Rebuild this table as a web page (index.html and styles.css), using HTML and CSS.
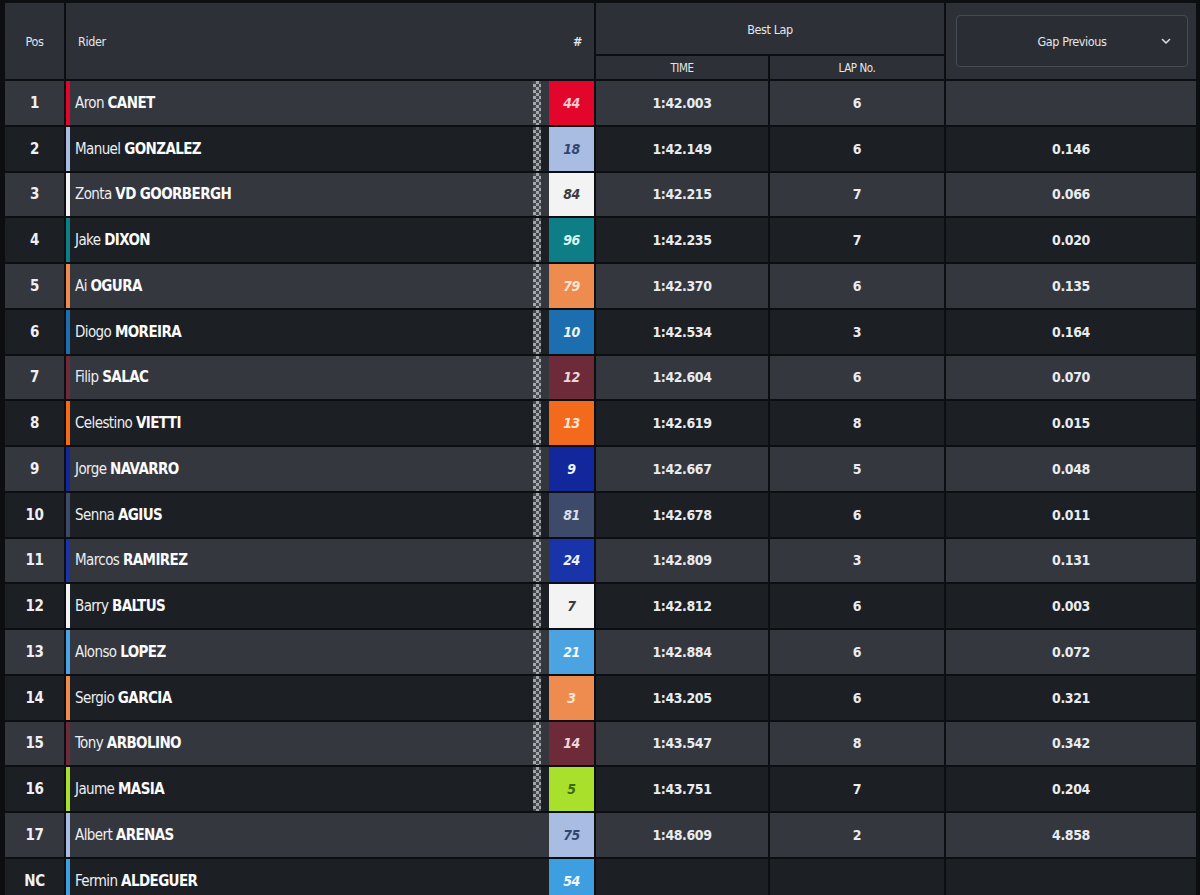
FILE: index.html
```html
<!DOCTYPE html>
<html lang="en">
<head>
<meta charset="utf-8">
<title>Results</title>
<link rel="stylesheet" href="styles.css">
</head>
<body>
<div class="board">
  <div class="head">
    <div class="h-pos">Pos</div>
    <div class="h-rider"><span>Rider</span><span class="hash">#</span></div>
    <div class="h-best">Best Lap</div>
    <div class="h-time">TIME</div>
    <div class="h-lap">LAP No.</div>
    <div class="h-gap">
      <div class="select">
        <span>Gap Previous</span>
        <svg class="chev" width="10" height="7" viewBox="0 0 10 7"><path d="M1.5 1.5 L5 5 L8.5 1.5" fill="none" stroke="#d8dbe0" stroke-width="1.6" stroke-linecap="round" stroke-linejoin="round"/></svg>
      </div>
    </div>
  </div>

  <div class="row light t-red"><div class="pos">1</div><div class="rider"><span class="name">Aron <b>CANET</b></span><span class="flag"></span><span class="num">44</span></div><div class="time">1:42.003</div><div class="lap">6</div><div class="gap"></div></div>
  <div class="row dark t-lav"><div class="pos">2</div><div class="rider"><span class="name">Manuel <b>GONZALEZ</b></span><span class="flag"></span><span class="num">18</span></div><div class="time">1:42.149</div><div class="lap">6</div><div class="gap">0.146</div></div>
  <div class="row light t-white"><div class="pos">3</div><div class="rider"><span class="name">Zonta <b>VD GOORBERGH</b></span><span class="flag"></span><span class="num">84</span></div><div class="time">1:42.215</div><div class="lap">7</div><div class="gap">0.066</div></div>
  <div class="row dark t-teal"><div class="pos">4</div><div class="rider"><span class="name">Jake <b>DIXON</b></span><span class="flag"></span><span class="num">96</span></div><div class="time">1:42.235</div><div class="lap">7</div><div class="gap">0.020</div></div>
  <div class="row light t-peach"><div class="pos">5</div><div class="rider"><span class="name">Ai <b>OGURA</b></span><span class="flag"></span><span class="num">79</span></div><div class="time">1:42.370</div><div class="lap">6</div><div class="gap">0.135</div></div>
  <div class="row dark t-blue"><div class="pos">6</div><div class="rider"><span class="name">Diogo <b>MOREIRA</b></span><span class="flag"></span><span class="num">10</span></div><div class="time">1:42.534</div><div class="lap">3</div><div class="gap">0.164</div></div>
  <div class="row light t-maroon"><div class="pos">7</div><div class="rider"><span class="name">Filip <b>SALAC</b></span><span class="flag"></span><span class="num">12</span></div><div class="time">1:42.604</div><div class="lap">6</div><div class="gap">0.070</div></div>
  <div class="row dark t-orange"><div class="pos">8</div><div class="rider"><span class="name">Celestino <b>VIETTI</b></span><span class="flag"></span><span class="num">13</span></div><div class="time">1:42.619</div><div class="lap">8</div><div class="gap">0.015</div></div>
  <div class="row light t-navy"><div class="pos">9</div><div class="rider"><span class="name">Jorge <b>NAVARRO</b></span><span class="flag"></span><span class="num">9</span></div><div class="time">1:42.667</div><div class="lap">5</div><div class="gap">0.048</div></div>
  <div class="row dark t-slate"><div class="pos">10</div><div class="rider"><span class="name">Senna <b>AGIUS</b></span><span class="flag"></span><span class="num">81</span></div><div class="time">1:42.678</div><div class="lap">6</div><div class="gap">0.011</div></div>
  <div class="row light t-royal"><div class="pos">11</div><div class="rider"><span class="name">Marcos <b>RAMIREZ</b></span><span class="flag"></span><span class="num">24</span></div><div class="time">1:42.809</div><div class="lap">3</div><div class="gap">0.131</div></div>
  <div class="row dark t-white"><div class="pos">12</div><div class="rider"><span class="name">Barry <b>BALTUS</b></span><span class="flag"></span><span class="num">7</span></div><div class="time">1:42.812</div><div class="lap">6</div><div class="gap">0.003</div></div>
  <div class="row light t-sky"><div class="pos">13</div><div class="rider"><span class="name">Alonso <b>LOPEZ</b></span><span class="flag"></span><span class="num">21</span></div><div class="time">1:42.884</div><div class="lap">6</div><div class="gap">0.072</div></div>
  <div class="row dark t-peach"><div class="pos">14</div><div class="rider"><span class="name">Sergio <b>GARCIA</b></span><span class="flag"></span><span class="num">3</span></div><div class="time">1:43.205</div><div class="lap">6</div><div class="gap">0.321</div></div>
  <div class="row light t-maroon"><div class="pos">15</div><div class="rider"><span class="name">Tony <b>ARBOLINO</b></span><span class="flag"></span><span class="num">14</span></div><div class="time">1:43.547</div><div class="lap">8</div><div class="gap">0.342</div></div>
  <div class="row dark t-lime"><div class="pos">16</div><div class="rider"><span class="name">Jaume <b>MASIA</b></span><span class="flag"></span><span class="num">5</span></div><div class="time">1:43.751</div><div class="lap">7</div><div class="gap">0.204</div></div>
  <div class="row light t-lav"><div class="pos">17</div><div class="rider"><span class="name">Albert <b>ARENAS</b></span><span class="noflag"></span><span class="num">75</span></div><div class="time">1:48.609</div><div class="lap">2</div><div class="gap">4.858</div></div>
  <div class="row dark t-sky2"><div class="pos">NC</div><div class="rider"><span class="name">Fermin <b>ALDEGUER</b></span><span class="noflag"></span><span class="num">54</span></div><div class="time"></div><div class="lap"></div><div class="gap"></div></div>
</div>
</body>
</html>
```

FILE: styles.css
```css
* { box-sizing: border-box; }
html, body {
  margin: 0;
  background: #0d0e11;
}
body {
  font-family: "DejaVu Sans Condensed", "DejaVu Sans", sans-serif;
  font-stretch: condensed;
  color: #eef0f3;
  overflow: hidden;
}
.board {
  width: 1196px;
  padding: 3px 0 0 5px;
  display: flex;
  flex-direction: column;
  gap: 2px;
}
.head {
  display: grid;
  grid-template-columns: 59px 528px 172px 174px 250px;
  grid-template-rows: 51px 23px;
  gap: 2px;
  font-size: 12.5px;
  letter-spacing: -0.4px;
  color: #e3e6eb;
}
.head > div { background: #2d3036; }
.h-pos {
  grid-row: 1 / 3;
  display: flex; align-items: center; justify-content: center;
}
.h-rider {
  grid-row: 1 / 3;
  display: flex; align-items: center; justify-content: space-between;
  padding: 0 10px 0 12px;
}
.hash { font-weight: bold; margin-right: 2px; }
.h-best {
  grid-column: 3 / 5;
  display: flex; align-items: center; justify-content: center;
  padding-top: 2px;
}
.h-time, .h-lap {
  grid-row: 2;
  display: flex; align-items: center; justify-content: center;
  font-size: 11.5px;
}
.h-time { grid-column: 3; }
.h-lap { grid-column: 4; }
.h-gap {
  grid-column: 5;
  grid-row: 1 / 3;
  display: flex; align-items: center;
  padding: 0 8px 0 10px;
}
.select {
  flex: 1;
  height: 52px;
  border: 1px solid #474b53;
  border-radius: 4px;
  background: #2a2d33;
  display: flex; align-items: center; justify-content: center;
  position: relative;
  font-size: 12.5px;
}
.chev { position: absolute; right: 16px; top: 22px; }

.row {
  display: grid;
  grid-template-columns: 59px 528px 172px 174px 250px;
  height: 43.75px;
  gap: 2px;
  font-size: 14px;
  letter-spacing: -0.4px;
}
.row > div { display: flex; align-items: center; }
.row.light > div { background: #34373e; }
.row.dark > div { background: #1c1f24; }
.pos { justify-content: center; font-weight: bold; font-size: 15px; }
.rider {
  border-left: 4px solid var(--team);
  padding-left: 5px;
}
.name { flex: 1; color: #eceef1; font-size: 15px; letter-spacing: -0.6px; }
.name b { color: #fbfbfc; }
.flag {
  width: 8px;
  align-self: stretch;
  margin-right: 8px;
  background: repeating-conic-gradient(#b9bbbf 0% 25%, #4a4d52 0% 50%) 0 0 / 6px 6px;
  opacity: 0.85;
}
.noflag { width: 8px; margin-right: 8px; }
.num {
  width: 45px;
  align-self: stretch;
  display: flex; align-items: center; justify-content: center;
  background: var(--team);
  color: var(--ink);
  font-weight: bold;
  font-style: italic;
  font-size: 14px;
}
.time, .lap, .gap { justify-content: center; font-weight: bold; color: #e9ebee; }

.t-red { --team: #e2062c; --ink: #f9c8d0; }
.t-lav { --team: #a9bde2; --ink: #34466e; }
.t-white { --team: #f3f3f4; --ink: #3a3b3f; }
.t-teal { --team: #0d7e86; --ink: #d6f6f2; }
.t-peach { --team: #ee8b4e; --ink: #fde4d2; }
.t-blue { --team: #1c6eae; --ink: #eef4fb; }
.t-maroon { --team: #6d2b3a; --ink: #f1d6dc; }
.t-orange { --team: #f36a1c; --ink: #fee6d6; }
.t-navy { --team: #12279c; --ink: #f2f4ff; }
.t-slate { --team: #3e4a6a; --ink: #d9deea; }
.t-royal { --team: #1934a8; --ink: #f0f3ff; }
.t-sky { --team: #4ba4e1; --ink: #f2f8fe; }
.t-lime { --team: #a9e02b; --ink: #3b6a12; }
.t-sky2 { --team: #3e9fe0; --ink: #f2f8fe; }
```
